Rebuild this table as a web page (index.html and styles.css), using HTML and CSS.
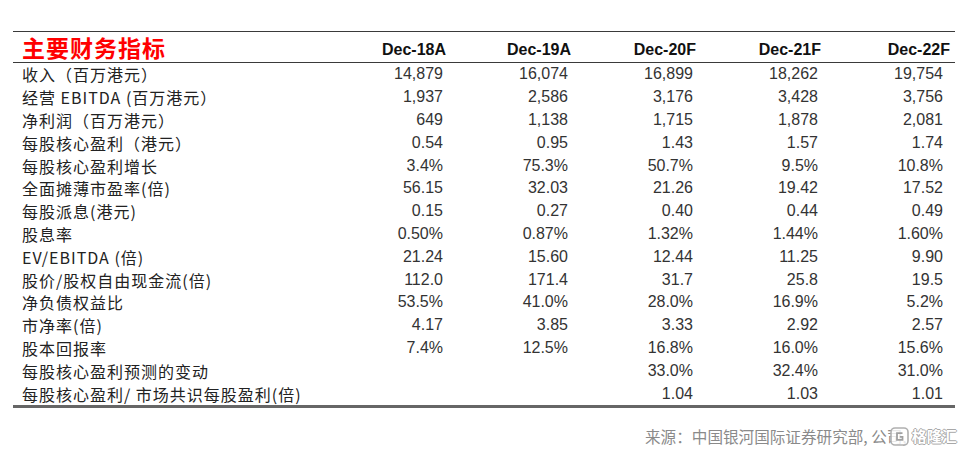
FILE: index.html
```html
<!DOCTYPE html>
<html lang="zh">
<head>
<meta charset="utf-8">
<link rel="stylesheet" href="styles.css">
</head>
<body>
<div class="page">
  <div class="table">
    <div class="row head">
      <div class="title">主要财务指标</div>
      <div class="h">Dec-18A</div>
      <div class="h">Dec-19A</div>
      <div class="h">Dec-20F</div>
      <div class="h">Dec-21F</div>
      <div class="h last">Dec-22F</div>
    </div>
    <div class="row"><div class="lab">收入（百万港元）</div><div class="n">14,879</div><div class="n">16,074</div><div class="n">16,899</div><div class="n">18,262</div><div class="n">19,754</div></div>
    <div class="row"><div class="lab">经营 EBITDA (百万港元）</div><div class="n">1,937</div><div class="n">2,586</div><div class="n">3,176</div><div class="n">3,428</div><div class="n">3,756</div></div>
    <div class="row"><div class="lab">净利润（百万港元）</div><div class="n">649</div><div class="n">1,138</div><div class="n">1,715</div><div class="n">1,878</div><div class="n">2,081</div></div>
    <div class="row"><div class="lab">每股核心盈利（港元）</div><div class="n">0.54</div><div class="n">0.95</div><div class="n">1.43</div><div class="n">1.57</div><div class="n">1.74</div></div>
    <div class="row"><div class="lab">每股核心盈利增长</div><div class="n">3.4%</div><div class="n">75.3%</div><div class="n">50.7%</div><div class="n">9.5%</div><div class="n">10.8%</div></div>
    <div class="row"><div class="lab">全面摊薄市盈率(倍)</div><div class="n">56.15</div><div class="n">32.03</div><div class="n">21.26</div><div class="n">19.42</div><div class="n">17.52</div></div>
    <div class="row"><div class="lab">每股派息(港元)</div><div class="n">0.15</div><div class="n">0.27</div><div class="n">0.40</div><div class="n">0.44</div><div class="n">0.49</div></div>
    <div class="row"><div class="lab">股息率</div><div class="n">0.50%</div><div class="n">0.87%</div><div class="n">1.32%</div><div class="n">1.44%</div><div class="n">1.60%</div></div>
    <div class="row"><div class="lab">EV/EBITDA (倍)</div><div class="n">21.24</div><div class="n">15.60</div><div class="n">12.44</div><div class="n">11.25</div><div class="n">9.90</div></div>
    <div class="row"><div class="lab">股价/股权自由现金流(倍)</div><div class="n">112.0</div><div class="n">171.4</div><div class="n">31.7</div><div class="n">25.8</div><div class="n">19.5</div></div>
    <div class="row"><div class="lab">净负债权益比</div><div class="n">53.5%</div><div class="n">41.0%</div><div class="n">28.0%</div><div class="n">16.9%</div><div class="n">5.2%</div></div>
    <div class="row"><div class="lab">市净率(倍)</div><div class="n">4.17</div><div class="n">3.85</div><div class="n">3.33</div><div class="n">2.92</div><div class="n">2.57</div></div>
    <div class="row"><div class="lab">股本回报率</div><div class="n">7.4%</div><div class="n">12.5%</div><div class="n">16.8%</div><div class="n">16.0%</div><div class="n">15.6%</div></div>
    <div class="row"><div class="lab">每股核心盈利预测的变动</div><div class="n"></div><div class="n"></div><div class="n">33.0%</div><div class="n">32.4%</div><div class="n">31.0%</div></div>
    <div class="row"><div class="lab">每股核心盈利/ 市场共识每股盈利(倍)</div><div class="n"></div><div class="n"></div><div class="n">1.04</div><div class="n">1.03</div><div class="n">1.01</div></div>
  </div>
  <div class="source">
    <span class="src-text">来源：中国银河国际证券研究部, 公司,</span>
    <span class="mark-text">格隆汇</span>
    <svg class="mark-icon" width="19" height="19" viewBox="0 0 19 19">
      <rect x="1" y="1" width="17" height="17" rx="4" fill="rgba(255,255,255,0.8)" stroke="#b0b0b0" stroke-width="1.6"/>
      <path d="M12.5 6.2 H7 V12.8 H12.5 V9.8 H9.8" fill="none" stroke="#a0a0a0" stroke-width="1.8"/>
    </svg>
  </div>
</div>
</body>
</html>
```

FILE: styles.css
```css
html, body {
  margin: 0;
  padding: 0;
  background: #ffffff;
}

.page {
  width: 965px;
  height: 455px;
  padding-top: 31px;
  box-sizing: border-box;
  font-family: "Liberation Sans", Arial, "Noto Sans CJK SC", sans-serif;
}

.table {
  margin-left: 13px;
  width: 942px;
  border-top: 1.5px solid #3a3a3a;
  border-bottom: 3px solid #666666;
}

.row {
  display: grid;
  grid-template-columns: 308px 125px 125px 125px 125px 134px;
  height: 22.8px;
  align-items: center;
}

.row.head {
  height: 30px;
  border-bottom: 1px solid #3a3a3a;
  align-items: center;
}

.title {
  padding-left: 9px;
  color: #ff0000;
  font-family: "Noto Sans CJK SC", sans-serif;
  font-weight: 700;
  font-size: 23px;
  line-height: 30px;
  letter-spacing: 1px;
}

.h {
  text-align: right;
  font-weight: 700;
  font-size: 16px;
  color: #111111;
  padding-top: 6px;
}

.h.last {
  padding-right: 5px;
}

.lab {
  padding-left: 9px;
  font-family: "Noto Sans CJK SC", sans-serif;
  font-size: 16px;
  line-height: 22px;
  letter-spacing: 1px;
  color: #222222;
  white-space: pre;
}

.n {
  text-align: right;
  padding-right: 3px;
  font-size: 16px;
  color: #333333;
}

.row .n:last-child {
  padding-right: 12px;
}

.source {
  position: relative;
  display: flex;
  align-items: center;
  gap: 5px;
  margin-left: 645px;
  margin-top: 16px;
  height: 24px;
}

.src-text {
  font-family: "Noto Sans CJK SC", sans-serif;
  font-size: 15.6px;
  color: #8a8a8a;
  white-space: pre;
}

.mark-icon {
  position: absolute;
  left: 245px;
  top: 3px;
}

.mark-text {
  font-family: "Noto Sans CJK SC", sans-serif;
  font-size: 15px;
  font-weight: 700;
  color: #ffffff;
  text-shadow: 1px 0 0 #a8a8a8, -1px 0 0 #a8a8a8, 0 1px 0 #a8a8a8, 0 -1px 0 #a8a8a8;
}
```
